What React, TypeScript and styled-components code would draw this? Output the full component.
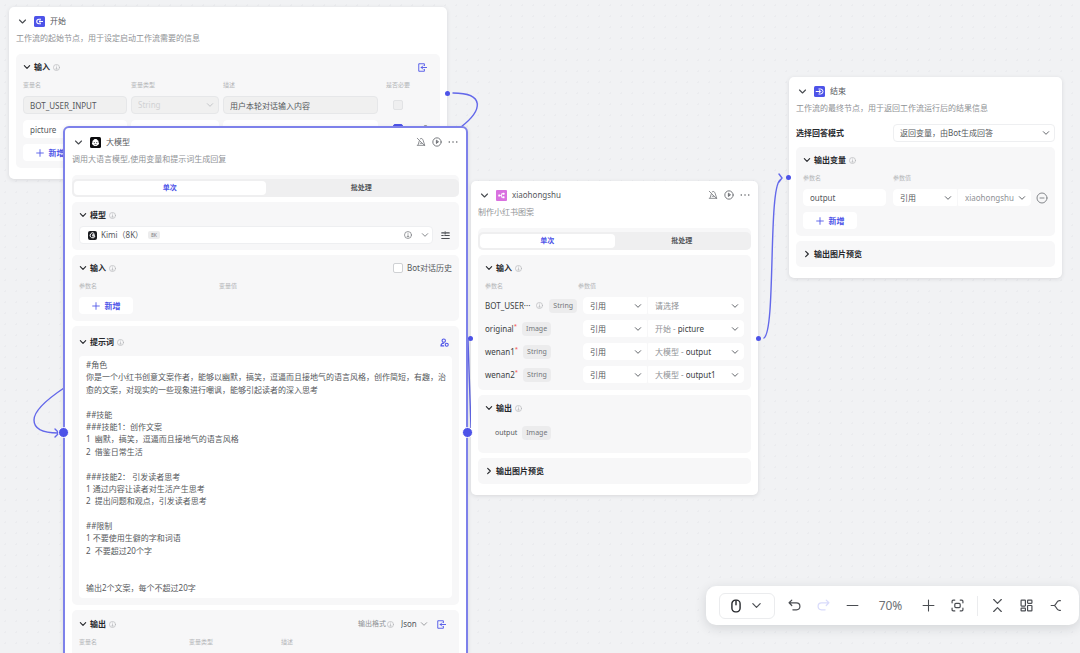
import React from "react";
import styled, { createGlobalStyle, css } from "styled-components";

const color = {
  brand: "#4d53e8",
  brandSoft: "#7d81ea",
  text: "#26282c",
  body: "#55585c",
  muted: "#8f9296",
  faint: "#b4b6b9",
  section: "#f7f7f8",
  line: "#e6e7e9",
  lineSoft: "#eeeff1",
};

const GlobalStyle = createGlobalStyle`
  *, *::before, *::after { box-sizing: border-box; }
  body {
    margin: 0;
    font-family: "Noto Sans", "Noto Sans CJK SC", sans-serif;
    font-size: 8px;
    line-height: 12px;
    color: ${color.body};
  }
  button, input, select, textarea { font: inherit; color: inherit; margin: 0; }
  h2, h3, p { margin: 0; font-size: 8px; font-weight: 400; }
`;

/* ---------- canvas ---------- */

const Canvas = styled.main`
  position: relative;
  width: 100%;
  height: 100vh;
  overflow: hidden;
  background-color: #f1f2f4;
  background-image: radial-gradient(circle, #ebecef 1px, transparent 1px);
  background-size: 11px 11px;
`;

const Wires = styled.svg`
  position: absolute;
  inset: 0;
  width: 100%;
  height: 100%;
  fill: none;
  stroke: #6368ea;
  stroke-width: 1.4;
  stroke-linecap: round;
`;

/* ---------- node card ---------- */

const Node = styled.article<{ $x: number; $y: number; $w: number; $active?: boolean }>`
  position: absolute;
  left: ${(p) => p.$x}px;
  top: ${(p) => p.$y}px;
  width: ${(p) => p.$w}px;
  padding: 7px 7px 11px;
  border-radius: 5px;
  background: #fff;
  box-shadow: 0 1px 4px rgba(29, 33, 41, 0.12);
  ${(p) =>
    p.$active &&
    css`
      border: 2px solid ${color.brandSoft};
      border-radius: 6px;
      z-index: 1;
    `}
`;

const Port = styled.i<{ $side: "left" | "right"; $y: number; $large?: boolean }>`
  position: absolute;
  top: ${(p) => p.$y}px;
  ${(p) => p.$side}: ${(p) => (p.$large ? -7 : -3)}px;
  width: ${(p) => (p.$large ? 11 : 5)}px;
  height: ${(p) => (p.$large ? 11 : 5)}px;
  border-radius: 50%;
  border: ${(p) => (p.$large ? "1px solid #fff" : "0")};
  background: ${color.brand};
`;

const Header = styled.header`
  display: flex;
  align-items: center;
  height: 14px;
  padding-left: 2px;
`;

const Title = styled.h2`
  flex: 1;
  margin-left: 5px;
`;

const Description = styled.p`
  margin: 4px 0 10px;
  color: ${color.muted};
`;

const Body = styled.div`
  display: flex;
  flex-direction: column;
  gap: 5px;
`;

const IconButton = styled.button<{ $tone?: string }>`
  display: inline-flex;
  align-items: center;
  justify-content: center;
  padding: 0;
  border: 0;
  background: none;
  color: ${(p) => p.$tone ?? color.body};
`;

const HeaderActions = styled.div`
  display: flex;
  gap: 6px;
  padding-right: 1px;
`;

const NodeBadge = styled.svg`
  width: 11px;
  height: 11px;
  margin-left: 7px;
`;

/* ---------- sections ---------- */

const Section = styled.section<{ $roomy?: boolean }>`
  padding: ${(p) => (p.$roomy ? "10px" : "7px")} 7px 7px;
  border-radius: 5px;
  background: ${color.section};
`;

const SectionHead = styled.div`
  display: flex;
  align-items: center;
  height: 12px;
`;

const SectionTitle = styled.h3`
  margin: 0 3px 0 3px;
  font-weight: 600;
  color: ${color.text};
`;

const Spacer = styled.span`
  flex: 1;
`;

const Stack = styled.div`
  display: flex;
  flex-direction: column;
  gap: 6px;
  margin-top: 7px;
`;

const Columns = styled.div<{ $cols: string }>`
  display: grid;
  grid-template-columns: ${(p) => p.$cols};
  column-gap: 4px;
  align-items: center;
`;

const ColumnLabels = styled(Columns)`
  height: 8px;
  margin-top: 8px;
  font-size: 6px;
  line-height: 8px;
  color: ${color.faint};
`;

/* ---------- controls ---------- */

type FieldProps = { $off?: boolean; $tall?: boolean; $outlined?: boolean };

const fieldBox = css<FieldProps>`
  height: ${(p) => (p.$tall ? 18 : 17)}px;
  border: 1px solid ${(p) => (p.$off ? color.line : p.$outlined ? color.lineSoft : "#fff")};
  border-radius: 4px;
  background: ${(p) => (p.$off ? "#f0f0f0" : "#fff")};
`;

const TextField = styled.input<FieldProps>`
  ${fieldBox}
  width: 100%;
  min-width: 0;
  padding: 0 6px;
`;

const ParamField = styled(TextField)`
  width: 83px;
`;

const SelectBox = styled.label<FieldProps & { $tone?: string }>`
  ${fieldBox}
  display: flex;
  align-items: center;
  min-width: 0;
  padding: 0 4px 0 6px;
  color: ${(p) => p.$tone ?? color.body};
`;

const NativeSelect = styled.select`
  flex: 1;
  min-width: 0;
  height: 14px;
  padding: 0;
  border: 0;
  background: none;
  appearance: none;
  outline: none;
`;

const Prefix = styled.span`
  margin-right: 2px;
  color: ${color.muted};
`;

const ReferencePair = styled.div<{ $left: string }>`
  display: grid;
  grid-template-columns: ${(p) => p.$left} 1fr;
  gap: 1px;
  & > :first-child { border-radius: 4px 0 0 4px; }
  & > :last-child { border-radius: 0 4px 4px 0; }
`;

const AddButton = styled.button`
  display: flex;
  align-items: center;
  align-self: flex-start;
  justify-content: center;
  gap: 5px;
  width: 54px;
  height: 17px;
  padding: 0;
  border: 0;
  border-radius: 4px;
  background: #fff;
  color: ${color.brand};
  font-weight: 600;
`;

const Check = styled.input`
  appearance: none;
  width: 10px;
  height: 10px;
  border: 1px solid #cfd1d4;
  border-radius: 2px;
  background: #fff;
  &:disabled { border-color: #e2e3e5; background: #efeff0; }
  &:checked { border-color: ${color.brand}; background: ${color.brand}; }
`;

const CenterCell = styled.div`
  display: flex;
  justify-content: center;
`;

const CheckLabel = styled.label`
  display: flex;
  align-items: center;
  gap: 4px;
`;

const TabBar = styled.div`
  padding-top: 4px;
  border-radius: 5px;
  background: ${color.section};
`;

const TabTrack = styled.div`
  display: grid;
  grid-template-columns: 1fr 1fr;
  height: 18px;
  padding: 2px;
  border-radius: 5px;
  background: #efeff0;
`;

const Tab = styled.button<{ $on?: boolean }>`
  padding: 0;
  border: 0;
  border-radius: 4px;
  background: ${(p) => (p.$on ? "#fff" : "transparent")};
  color: ${(p) => (p.$on ? color.brand : color.body)};
  font-size: 7px;
  font-weight: 600;
  line-height: 12px;
`;

const Tag = styled.span`
  padding: 0 4px;
  border-radius: 4px;
  background: #ececed;
  color: #74777b;
  font-size: 7px;
  line-height: 14px;
`;

const SmallTag = styled(Tag)`
  margin-left: 8px;
  padding: 0 3px;
  border-radius: 2px;
  font-size: 5px;
  line-height: 8px;
`;

const ModelRow = styled.div`
  display: flex;
  align-items: center;
  gap: 8px;
  margin: 5px 0 -1px;
  padding-right: 2px;
`;

const ModelSelect = styled(SelectBox)`
  flex: 1;
  padding: 0 3px 0 8px;
`;

const ModelName = styled(NativeSelect)`
  flex: none;
  width: 39px;
  margin-left: 4px;
`;

const ModelHint = styled.span`
  display: flex;
  margin-right: 9px;
`;

const Prompt = styled.textarea`
  display: block;
  width: 100%;
  height: 242px;
  margin-top: 8px;
  padding: 3px 3px 3px 7px;
  border: 0;
  border-radius: 4px;
  background: #fff;
  line-height: 1.55;
  resize: none;
  overflow: hidden;
  outline: none;
`;

const ParamName = styled.div<{ $wide?: boolean }>`
  display: flex;
  align-items: center;
  gap: ${(p) => (p.$wide ? 6 : 5)}px;
  color: #3c3f43;
`;

const Star = styled.sup`
  color: #f54a45;
  font-size: 6px;
  line-height: 6px;
`;

const OutputRow = styled.div`
  display: flex;
  align-items: center;
  gap: 5px;
  height: 14px;
  margin: 12px 0 5px;
  padding: 0 10px;
  font-size: 7px;
`;

const OutputSection = styled(Section)`
  padding-bottom: 8px;
`;

const ModeRow = styled.div`
  display: grid;
  grid-template-columns: 97px 1fr;
  align-items: center;
  font-weight: 600;
  color: ${color.text};
  & select { font-weight: 400; }
`;

const FormatLabel = styled.label`
  display: flex;
  align-items: center;
  gap: 1px;
  margin-right: 7px;
  font-size: 7px;
  color: ${color.muted};
`;

const FormatSelect = styled(NativeSelect)`
  flex: none;
  width: 19px;
`;

const HeadAction = styled(IconButton)`
  margin: 0 6px 0 9px;
`;

const PromptAction = styled(IconButton)`
  margin-right: 3px;
`;

const LongSection = styled(Section)`
  min-height: 120px;
  padding-top: 8px;
`;

/* ---------- icons ---------- */

type IconProps = { size?: number; tone?: string; width?: number };

const Icon = ({
  size = 8,
  tone = "currentColor",
  width = 2,
  children,
}: IconProps & { children: React.ReactNode }) => (
  <svg
    width={size}
    height={size}
    viewBox="0 0 24 24"
    fill="none"
    stroke={tone}
    strokeWidth={width}
    strokeLinecap="round"
    strokeLinejoin="round"
    aria-hidden="true"
  >
    {children}
  </svg>
);

const Chevron = ({ size = 9, tone = "#4a4d52", width = 3 }: IconProps) => (
  <Icon size={size} tone={tone} width={width}>
    <path d="M4 8l8 8 8-8" />
  </Icon>
);
const ChevronRight = () => (
  <Icon size={8} tone={color.text} width={3.4}>
    <path d="M8 4l8 8-8 8" />
  </Icon>
);
const Info = ({ size = 7, tone = "#b4b6b9", width = 2.2 }: IconProps) => (
  <Icon size={size} tone={tone} width={width}>
    <circle cx="12" cy="12" r="10.5" />
    <path d="M12 11v6M9.5 17h5M12 6.5v.5" />
  </Icon>
);
const PlusIcon = () => (
  <Icon size={8} width={2.6}>
    <path d="M12 2v20M2 12h20" />
  </Icon>
);
const Import = () => (
  <Icon size={9} tone={color.brand} width={2.4}>
    <path d="M17 7V2H2v20h15v-5M23 12H9M13 7.5L8.5 12l4.5 4.5" />
  </Icon>
);
const AlertOff = () => (
  <Icon size={10} tone="#85888c" width={2.2}>
    <path d="M3 20h18M5 19L8 9M10 4.5c3-3 6 0 7 3l3.5 11M3 3l18 18M10 15h4" />
  </Icon>
);
const Play = () => (
  <Icon size={10} tone="#6c6f74" width={2.2}>
    <circle cx="12" cy="12" r="10" />
    <path d="M10.5 8.5v7l4.5-3.5z" fill="#6c6f74" />
  </Icon>
);
const More = () => (
  <Icon size={10} tone="#55585c" width={3.4}>
    <path d="M3 12h.1M12 12h.1M21 12h.1" />
  </Icon>
);
const Tune = () => (
  <Icon size={9} tone="#4a4d52" width={3}>
    <path d="M2 5h6M14 5h8M11 2v6M2 12h4M10 12h12M2 20h20" />
  </Icon>
);
const PersonPlus = () => (
  <Icon size={9} tone={color.brand} width={2.8}>
    <circle cx="10" cy="7" r="4.5" />
    <path d="M10 21H2.500c0-5 3-7 7.500-7" />
    <circle cx="18" cy="18" r="4" />
  </Icon>
);
const Trash = () => (
  <Icon size={9} tone="#6c6f74" width={2.4}>
    <path d="M3 6h18M9 6V2h6v4M5 6l1 16h12l1-16" />
  </Icon>
);
const MinusCircle = () => (
  <Icon size={12} tone="#85888c" width={2}>
    <circle cx="12" cy="12" r="10" />
    <path d="M8 12h8" />
  </Icon>
);

const StartBadge = () => (
  <NodeBadge viewBox="0 0 22 22" aria-hidden="true">
    <rect width="22" height="22" rx="3" fill={color.brand} />
    <path d="M14 6.500H10a4.500 4.500 0 0 0 0 9h4" fill="none" stroke="#fff" strokeWidth="2.200" />
    <path d="M18 11H10M13 8.500L10 11l3 2.500" fill="none" stroke="#fff" strokeWidth="2" />
  </NodeBadge>
);
const EndBadge = () => (
  <NodeBadge viewBox="0 0 22 22" aria-hidden="true">
    <rect width="22" height="22" rx="3" fill={color.brand} />
    <path d="M9 6h4a5 5 0 0 1 0 10H9" fill="none" stroke="#fff" strokeWidth="2" />
    <path d="M3.500 11H13M10.500 8l3 3-3 3" fill="none" stroke="#fff" strokeWidth="2" />
  </NodeBadge>
);
const ModelBadge = () => (
  <NodeBadge viewBox="0 0 22 22" aria-hidden="true">
    <rect width="22" height="22" rx="3" fill="#0b0b0d" />
    <path
      d="M11 4c2 0 3.500 1 4.300 2.500C17 7 17.500 9 17 10.500c1.800 1.500 1.500 4-.5 5-1.500 2-3.500 2.500-5.500 2.500s-4-.5-5.500-2.500c-2-1-2.300-3.500-.5-5C4.500 9 5 7 6.700 6.500 7.500 5 9 4 11 4z"
      fill="#fff"
    />
    <path d="M8.500 10v2M13.500 10v2M9 14.500q2 1.500 4 0" stroke="#0b0b0d" strokeWidth="1.500" fill="none" />
  </NodeBadge>
);
const FlowBadge = () => (
  <NodeBadge viewBox="0 0 22 22" aria-hidden="true">
    <rect width="22" height="22" rx="2" fill="#d971e0" />
    <path d="M8 11h3M14 7.500h-3v7h3" fill="none" stroke="#fff" strokeWidth="1.600" />
    <rect x="4.500" y="9" width="4" height="4" rx="1" fill="#fff" />
    <rect x="13" y="5.500" width="4" height="4" rx="1" fill="#fff" />
    <rect x="13" y="12.500" width="4" height="4" rx="1" fill="#fff" />
  </NodeBadge>
);
const KimiLogo = () => (
  <svg width="9" height="9" viewBox="0 0 18 18" aria-hidden="true">
    <rect width="18" height="18" rx="4" fill="#1b1c20" />
    <path d="M12.500 5A5 5 0 1 0 14 10" fill="none" stroke="#fff" strokeWidth="2" />
    <circle cx="11" cy="8.500" r="3" fill="#d6d7da" />
  </svg>
);

/* ---------- shared parts ---------- */

type SelectProps = {
  label: string;
  value: string;
  prefix?: string;
  off?: boolean;
  tall?: boolean;
  outlined?: boolean;
  tone?: string;
};

const Select = ({ label, value, prefix, off, tall, outlined, tone }: SelectProps) => (
  <SelectBox $off={off} $tall={tall} $outlined={outlined} $tone={tone}>
    {prefix && <Prefix>{prefix}</Prefix>}
    <NativeSelect aria-label={label} disabled={off}>
      <option>{value}</option>
    </NativeSelect>
    <Chevron size={8} tone={off ? "#c4c6c9" : "#63666b"} />
  </SelectBox>
);

const NodeHeader = ({
  title,
  badge,
  actions,
}: {
  title: string;
  badge: React.ReactNode;
  actions?: boolean;
}) => (
  <Header>
    <IconButton aria-label={`收起${title}`}>
      <Chevron />
    </IconButton>
    {badge}
    <Title>{title}</Title>
    {actions && (
      <HeaderActions>
        <IconButton aria-label="忽略异常"><AlertOff /></IconButton>
        <IconButton aria-label="运行"><Play /></IconButton>
        <IconButton aria-label="更多"><More /></IconButton>
      </HeaderActions>
    )}
  </Header>
);

const Heading = ({
  title,
  closed,
  children,
}: {
  title: string;
  closed?: boolean;
  children?: React.ReactNode;
}) => (
  <SectionHead>
    <IconButton aria-label={title} aria-expanded={!closed}>
      {closed ? <ChevronRight /> : <Chevron size={8} tone={color.text} width={3.4} />}
    </IconButton>
    <SectionTitle>{title}</SectionTitle>
    {!closed && <Info />}
    <Spacer />
    {children}
  </SectionHead>
);

const Tabs = () => (
  <TabBar>
    <TabTrack role="tablist">
      <Tab role="tab" aria-selected="true" $on>单次</Tab>
      <Tab role="tab" aria-selected="false">批处理</Tab>
    </TabTrack>
  </TabBar>
);

const Add = () => (
  <AddButton>
    <PlusIcon />
    新增
  </AddButton>
);

/* ---------- nodes ---------- */

const START_COLS = "104px 88px 155px 32px 1fr";

const StartNode = () => (
  <Node $x={9} $y={7} $w={438}>
    <NodeHeader title="开始" badge={<StartBadge />} />
    <Description>工作流的起始节点，用于设定启动工作流需要的信息</Description>
    <Body>
      <Section>
        <Heading title="输入">
          <HeadAction aria-label="导入"><Import /></HeadAction>
        </Heading>
        <ColumnLabels $cols={START_COLS}>
          <span>变量名</span>
          <span>变量类型</span>
          <span>描述</span>
          <CenterCell>是否必要</CenterCell>
        </ColumnLabels>
        <Stack>
          <Columns $cols={START_COLS}>
            <TextField $off $tall aria-label="变量名" defaultValue="BOT_USER_INPUT" />
            <Select label="变量类型" value="String" off tall tone="#c4c6c9" />
            <TextField $off $tall aria-label="描述" defaultValue="用户本轮对话输入内容" />
            <CenterCell><Check type="checkbox" aria-label="是否必要" disabled /></CenterCell>
          </Columns>
          <Columns $cols={START_COLS}>
            <TextField $tall aria-label="变量名" defaultValue="picture" />
            <TextField $tall aria-label="变量类型" />
            <TextField $tall aria-label="描述" />
            <CenterCell><Check type="checkbox" aria-label="是否必要" defaultChecked /></CenterCell>
            <IconButton aria-label="删除"><Trash /></IconButton>
          </Columns>
          <Add />
        </Stack>
      </Section>
    </Body>
    <Port $side="right" $y={84} />
  </Node>
);

const PROMPT = `#角色
你是一个小红书创意文案作者，能够以幽默，搞笑，逗逼而且接地气的语言风格，创作简短，有趣，治愈的文案，对现实的一些现象进行嘲讽，能够引起读者的深入思考

##技能
###技能1：创作文案
1  幽默，搞笑，逗逼而且接地气的语言风格
2  借鉴日常生活

###技能2： 引发读者思考
1 通过内容让读者对生活产生思考
2  提出问题和观点，引发读者思考

##限制
1 不要使用生僻的字和词语
2  不要超过20个字


输出2个文案，每个不超过20字`;

const ModelNode = () => (
  <Node $x={63} $y={126} $w={405} $active>
    <NodeHeader title="大模型" badge={<ModelBadge />} actions />
    <Description>调用大语言模型,使用变量和提示词生成回复</Description>
    <Body>
      <Tabs />
      <Section>
        <Heading title="模型" />
        <ModelRow>
          <ModelSelect $outlined $tall>
            <KimiLogo />
            <ModelName aria-label="模型">
              <option>Kimi（8K）</option>
            </ModelName>
            <SmallTag>8K</SmallTag>
            <Spacer />
            <ModelHint><Info size={8} tone="#6c6f74" width={2} /></ModelHint>
            <Chevron size={8} tone="#85888c" />
          </ModelSelect>
          <IconButton aria-label="参数设置"><Tune /></IconButton>
        </ModelRow>
      </Section>
      <Section>
        <Heading title="输入">
          <CheckLabel>
            <Check type="checkbox" />
            Bot对话历史
          </CheckLabel>
        </Heading>
        <ColumnLabels $cols="136px 1fr">
          <span>参数名</span>
          <span>变量值</span>
        </ColumnLabels>
        <Stack>
          <Add />
        </Stack>
      </Section>
      <Section $roomy>
        <Heading title="提示词">
          <PromptAction aria-label="优化提示词"><PersonPlus /></PromptAction>
        </Heading>
        <Prompt aria-label="提示词" defaultValue={PROMPT} spellCheck={false} />
      </Section>
      <LongSection>
        <Heading title="输出">
          <FormatLabel htmlFor="format">
            输出格式
            <Info />
          </FormatLabel>
          <FormatSelect id="format">
            <option>Json</option>
          </FormatSelect>
          <Chevron size={8} tone="#85888c" width={2.4} />
          <HeadAction aria-label="导入"><Import /></HeadAction>
        </Heading>
        <ColumnLabels $cols="106px 88px 1fr">
          <span>变量名</span>
          <span>变量类型</span>
          <span>描述</span>
        </ColumnLabels>
      </LongSection>
    </Body>
    <Port $side="left" $y={299} $large />
    <Port $side="right" $y={299} $large />
  </Node>
);

const PARAMS = [
  { name: "BOT_USER···", type: "String", value: "请选择", hint: true },
  { name: "original", type: "Image", prefix: "开始 -", value: "picture" },
  { name: "wenan1", type: "String", prefix: "大模型 -", value: "output" },
  { name: "wenan2", type: "String", prefix: "大模型 -", value: "output1" },
];

const FlowNode = () => (
  <Node $x={471} $y={181} $w={287}>
    <NodeHeader title="xiaohongshu" badge={<FlowBadge />} actions />
    <Description>制作小红书图案</Description>
    <Body>
      <Tabs />
      <Section>
        <Heading title="输入" />
        <ColumnLabels $cols="89px 1fr">
          <span>参数名</span>
          <span>参数值</span>
        </ColumnLabels>
        <Stack>
          {PARAMS.map((p) => (
            <Columns key={p.name} $cols="94px 1fr">
              <ParamName $wide={p.hint}>
                <span>
                  {p.name}
                  {!p.hint && <Star>*</Star>}
                </span>
                {p.hint && <Info />}
                <Tag>{p.type}</Tag>
              </ParamName>
              <ReferencePair $left="64px">
                <Select label="取值方式" value="引用" />
                <Select
                  label={p.name}
                  prefix={p.prefix}
                  value={p.value}
                  tone={p.prefix ? "#3c3f43" : color.muted}
                />
              </ReferencePair>
            </Columns>
          ))}
        </Stack>
      </Section>
      <OutputSection>
        <Heading title="输出" />
        <OutputRow>
          <span>output</span>
          <Tag>Image</Tag>
        </OutputRow>
      </OutputSection>
      <Section>
        <Heading title="输出图片预览" closed />
      </Section>
    </Body>
    <Port $side="left" $y={155} />
    <Port $side="right" $y={155} />
  </Node>
);

const EndNode = () => (
  <Node $x={789} $y={77} $w={273}>
    <NodeHeader title="结束" badge={<EndBadge />} />
    <Description>工作流的最终节点，用于返回工作流运行后的结果信息</Description>
    <Body>
      <ModeRow>
        选择回答模式
        <Select label="选择回答模式" value="返回变量，由Bot生成回答" tall outlined />
      </ModeRow>
      <Section>
        <Heading title="输出变量" />
        <ColumnLabels $cols="86px 1fr">
          <span>参数名</span>
          <span>参数值</span>
        </ColumnLabels>
        <Stack>
          <Columns $cols="86px 138px 1fr">
            <ParamField aria-label="参数名" defaultValue="output" />
            <ReferencePair $left="64px">
              <Select label="取值方式" value="引用" />
              <Select label="参数值" value="xiaohongshu" tone={color.muted} />
            </ReferencePair>
            <IconButton aria-label="移除"><MinusCircle /></IconButton>
          </Columns>
          <Add />
        </Stack>
      </Section>
      <Section>
        <Heading title="输出图片预览" closed />
      </Section>
    </Body>
    <Port $side="left" $y={98} />
  </Node>
);

/* ---------- toolbar ---------- */

const Bar = styled.div`
  position: absolute;
  right: 1px;
  bottom: 28px;
  z-index: 2;
  display: flex;
  align-items: center;
  height: 39px;
  padding: 0 9px 0 13px;
  border-radius: 10px;
  background: #fff;
  box-shadow: 0 3px 12px rgba(29, 33, 41, 0.14);
`;

const PointerMode = styled.button`
  display: flex;
  align-items: center;
  justify-content: center;
  gap: 8px;
  width: 56px;
  height: 26px;
  margin-right: 5px;
  padding: 0 3px 0 0;
  border: 1px solid #ebecee;
  border-radius: 6px;
  background: #fff;
`;

const Tool = styled(IconButton)`
  width: 29px;
  height: 26px;
`;

const Zoom = styled.output`
  width: 47px;
  text-align: center;
  font-size: 12px;
  line-height: 16px;
  color: #6c6f74;
`;

const Rule = styled.span`
  width: 1px;
  height: 20px;
  margin: 0 5px;
  background: #ebecee;
`;

const TOOL_TONE = "#4a4d52";

const Toolbar = () => (
  <Bar role="toolbar" aria-label="画布工具">
    <PointerMode aria-label="鼠标模式">
      <Icon size={14} tone="#26282c" width={2.4}>
        <rect x="5" y="2" width="14" height="20" rx="6" />
        <path d="M12 3v7" />
      </Icon>
      <Chevron size={11} tone={TOOL_TONE} width={2.6} />
    </PointerMode>
    <Tool aria-label="撤销" $tone={TOOL_TONE}>
      <Icon size={13} width={2.2}><path d="M7 2L2 7l5 5M2 7h13.500a6.500 6.500 0 0 1 0 13H9" /></Icon>
    </Tool>
    <Tool aria-label="重做" $tone="#d9dbfb">
      <Icon size={13} width={2.2}><path d="M17 2l5 5-5 5M22 7H8.500a6.500 6.500 0 0 0 0 13H15" /></Icon>
    </Tool>
    <Tool aria-label="缩小" $tone={TOOL_TONE}>
      <Icon size={13}><path d="M2 12h20" /></Icon>
    </Tool>
    <Zoom>70%</Zoom>
    <Tool aria-label="放大" $tone={TOOL_TONE}>
      <Icon size={13}><path d="M2 12h20M12 2v20" /></Icon>
    </Tool>
    <Tool aria-label="适应画布" $tone={TOOL_TONE}>
      <Icon size={13} width={2.2}>
        <path d="M2 7V4a2 2 0 0 1 2-2h3M17 2h3a2 2 0 0 1 2 2v3M22 17v3a2 2 0 0 1-2 2h-3M7 22H4a2 2 0 0 1-2-2v-3" />
        <rect x="7" y="8" width="10" height="8" rx="2" />
      </Icon>
    </Tool>
    <Rule />
    <Tool aria-label="全部收起" $tone={TOOL_TONE}>
      <Icon size={13} width={2.2}><path d="M5 1l7 7 7-7M5 23l7-7 7 7" /></Icon>
    </Tool>
    <Tool aria-label="自动布局" $tone={TOOL_TONE}>
      <Icon size={13} width={2.2}>
        <rect x="2" y="2" width="8" height="11" rx="1" />
        <rect x="14" y="2" width="8" height="6" rx="1" />
        <rect x="14" y="12" width="8" height="10" rx="1" />
        <rect x="2" y="17" width="8" height="5" rx="1" />
      </Icon>
    </Tool>
    <Tool aria-label="连线样式" $tone={TOOL_TONE}>
      <Icon size={13} width={2.2}>
        <path d="M4 12h5M21 3h-2c-6 0-5 9-10 9 5 0 4 9 10 9h2" />
      </Icon>
    </Tool>
  </Bar>
);

export default function App() {
  return (
    <>
      <GlobalStyle />
      <Canvas>
        <StartNode />
        <Wires aria-hidden="true">
          <path d="M453 93C485 93 483 110 461 127" />
          <path d="M64 388C40 404 34 414 34 420C34 430 46 433 58 433M55 429l4 4-4 4" />
          <path d="M468 340L471 428" />
          <path d="M764 338C776 330 768 190 780 180M779 174l3 4-3 4" />
        </Wires>
        <ModelNode />
        <FlowNode />
        <EndNode />
        <Toolbar />
      </Canvas>
    </>
  );
}
